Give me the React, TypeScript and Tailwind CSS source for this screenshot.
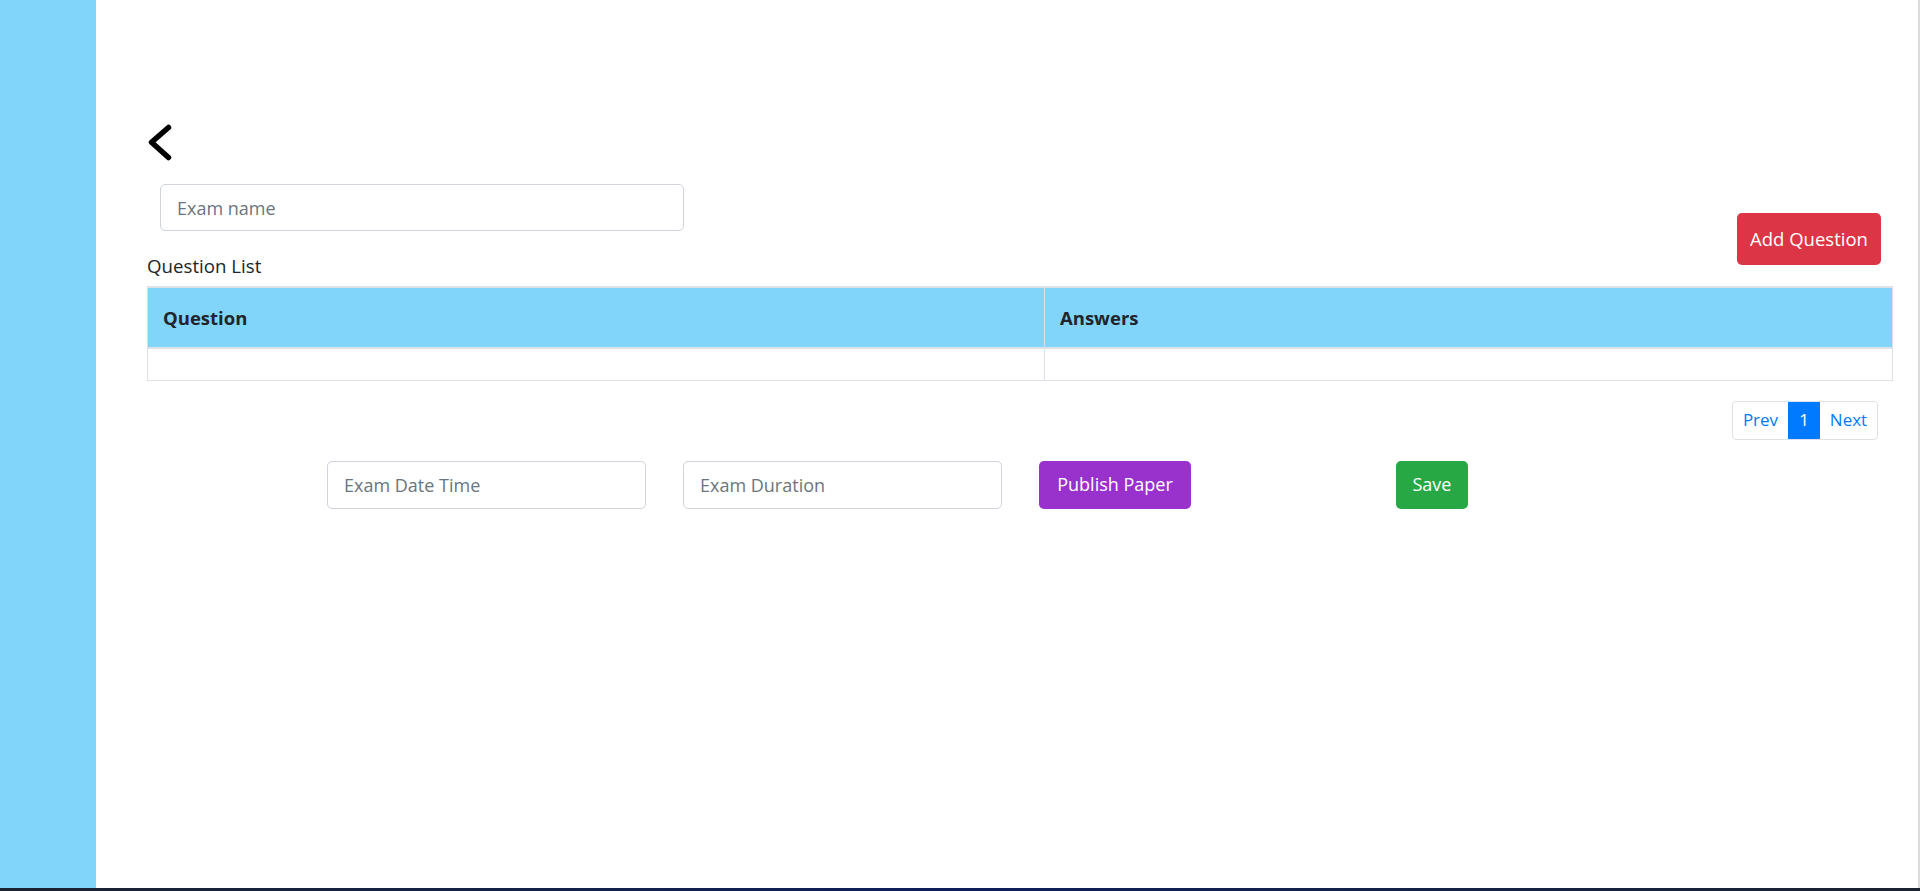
import React from "react";

const BackChevron = () => (
    <svg width="26" height="40" viewBox="0 0 26 40" fill="none" className="block">
        <polyline
            points="21.5,5.5 4.5,20.3 21.5,35.5"
            stroke="#000"
            strokeWidth="5.5"
            strokeLinecap="round"
            strokeLinejoin="round"
        />
    </svg>
);

export default function App() {
    return (
        <div className="h-[891px] flex flex-col bg-white text-[#212529]" style={{ fontFamily: '"Open Sans", "Noto Sans", sans-serif' }}>
            <div className="flex flex-1 min-h-0">
                {/* Sidebar */}
                <div className="w-[96px] shrink-0 bg-[#81d4fa]" />

                {/* Main */}
                <div className="flex-1 border-r-2 border-[#dcdcdc] pl-[51px] pr-[25px] pt-[122px]">
                    <BackChevron />

                    {/* Exam name + Add Question */}
                    <div className="flex justify-between items-start mt-[22px]">
                        <div className="flex flex-col">
                            <input
                                placeholder="Exam name"
                                className="ml-[13px] w-[524px] h-[47px] px-[16px] border border-[#ced4da] rounded-[5px] text-[18px] placeholder:text-[#6c757d] outline-none"
                            />
                            <div className="mt-[21px] h-[28px] leading-[28px] text-[18.7px]">Question List</div>
                        </div>
                        <button className="mt-[29px] mr-[12px] w-[144px] h-[52px] rounded-[5px] bg-[#dc3545] text-white text-[18.5px]">
                            Add Question
                        </button>
                    </div>

                    {/* Table */}
                    <table className="mt-[6px] w-[1746px] table-fixed border-collapse">
                        <colgroup>
                            <col className="w-[897px]" />
                            <col />
                        </colgroup>
                        <thead>
                            <tr className="bg-[#81d4fa]">
                                <th className="h-[61px] text-left font-bold text-[18.5px] pl-[15px] border border-[#dee2e6] border-t-2 border-b-2">Question</th>
                                <th className="h-[61px] text-left font-bold text-[18.5px] pl-[15px] border border-[#dee2e6] border-t-2 border-b-2">Answers</th>
                            </tr>
                        </thead>
                        <tbody>
                            <tr>
                                <td className="h-[32px] border border-[#dee2e6]" />
                                <td className="h-[32px] border border-[#dee2e6]" />
                            </tr>
                        </tbody>
                    </table>

                    {/* Pagination */}
                    <div className="flex justify-end mt-[20px] pr-[15px]">
                        <div className="flex h-[39px] border border-[#dee2e6] rounded-[4px] overflow-hidden text-[17px]">
                            <button className="w-[55px] text-[#007bff]">Prev</button>
                            <button className="w-[32px] bg-[#007bff] text-white">1</button>
                            <button className="w-[57px] text-[#007bff]">Next</button>
                        </div>
                    </div>

                    {/* Bottom controls */}
                    <div className="flex items-center ml-[180px] mt-[21px]">
                        <input
                            placeholder="Exam Date Time"
                            className="w-[319px] h-[48px] px-[16px] border border-[#ced4da] rounded-[5px] text-[18px] placeholder:text-[#6c757d] outline-none"
                        />
                        <input
                            placeholder="Exam Duration"
                            className="ml-[37px] w-[319px] h-[48px] px-[16px] border border-[#ced4da] rounded-[5px] text-[18px] placeholder:text-[#6c757d] outline-none"
                        />
                        <button className="ml-[37px] w-[152px] h-[48px] rounded-[5px] bg-[#9932cc] text-white text-[18px]">
                            Publish Paper
                        </button>
                        <button className="ml-[205px] w-[72px] h-[48px] rounded-[5px] bg-[#28a745] text-white text-[18px]">
                            Save
                        </button>
                    </div>
                </div>
            </div>
            <div className="h-[3px] bg-gradient-to-r from-[#1b2230] via-[#0e1e5c] to-[#1b2230]" />
        </div>
    );
}
